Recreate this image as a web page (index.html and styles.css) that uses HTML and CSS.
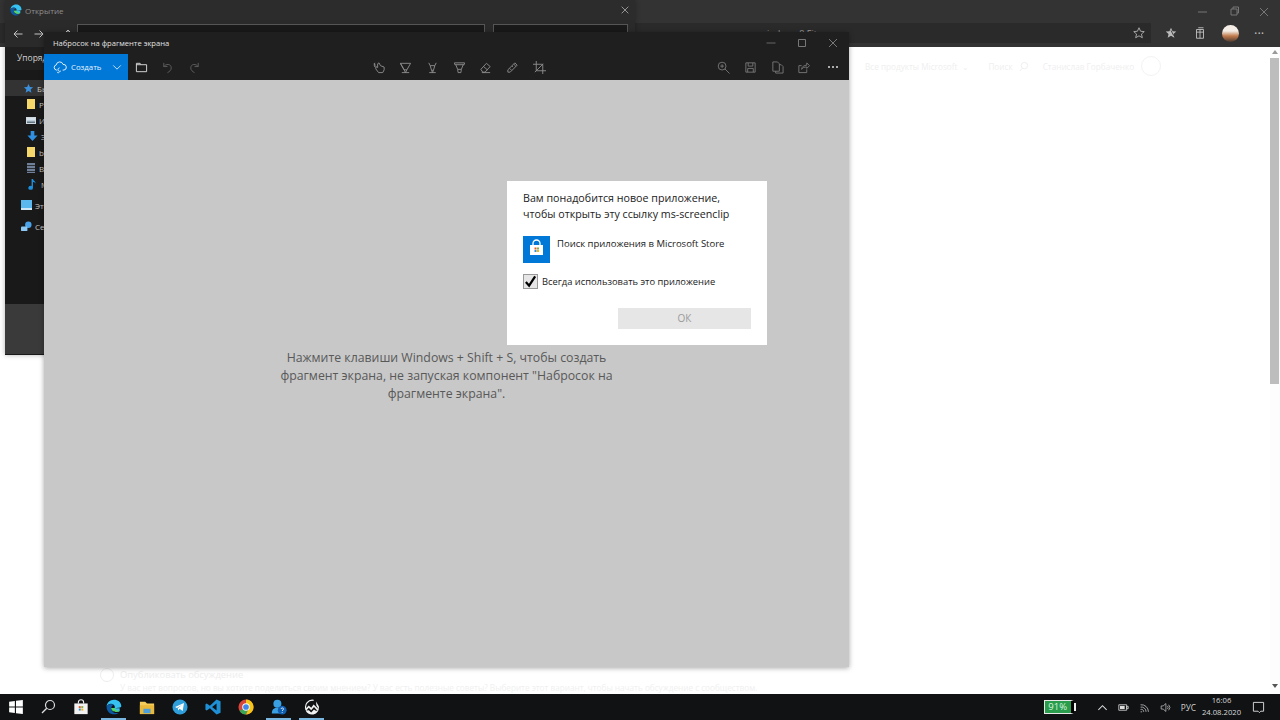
FILE: index.html
```html
<!DOCTYPE html>
<html lang="ru">
<head>
<meta charset="utf-8">
<title>Набросок на фрагменте экрана</title>
<link rel="stylesheet" href="styles.css">
</head>
<body>
<div class="desktop">
  <main class="browser">
    <div class="b-title">
      <svg class="wc" viewBox="0 0 30 12"><path d="M10 6h9" stroke="#777" fill="none"/></svg>
      <svg class="wc" viewBox="0 0 30 12"><path d="M12 3h6v6h-6zM14 3V1h5.500v6H18" stroke="#777" fill="none"/></svg>
      <svg class="wc" viewBox="0 0 30 12"><path d="M11 2l8 8M19 2l-8 8" stroke="#777" fill="none"/></svg>
    </div>
    <div class="b-tools">
      <div class="b-address"><span class="b-url">windows 8 Fit</span>
        <svg class="bi bi-star" viewBox="0 0 16 16"><path d="M8 2l1.800 4 4.200.400-3.200 2.800 1 4.200L8 11.200 4.200 13.400l1-4.200L2 6.400 6.200 6z" fill="none" stroke="#b5b5b5"/></svg>
      </div>
      <div class="b-icons">
        <svg class="bi" viewBox="0 0 16 16"><path d="M8 2l1.800 4 4.200.400-3.200 2.800 1 4.200L8 11.200 4.200 13.400l1-4.200L2 6.400 6.200 6z" fill="#bbb"/><path d="M8 5l3 6" stroke="#333"/></svg>
        <svg class="bi" viewBox="0 0 16 16"><path d="M4 4h8v10H4zM6 2h6M4 7h8M8 4v10" fill="none" stroke="#c5c5c5"/></svg>
        <span class="avatar"></span>
        <span class="b-more">···</span>
      </div>
    </div>
    <div class="page">
      <div class="page-main">
        <div class="ms-nav">
          <span>Все продукты Microsoft</span><span>⌄</span><span class="ms-search">Поиск</span>
          <svg class="ms-loupe" viewBox="0 0 12 12"><circle cx="7" cy="5" r="3.500" fill="none" stroke="#eee"/><path d="M4.500 8L2 11" stroke="#eee"/></svg>
          <span>Станислав Горбаченко</span>
          <span class="ms-user"></span>
        </div>
        <div class="discuss">
          <div class="discuss-title"><span class="radio"></span><span>Опубликовать обсуждение</span></div>
          <p class="discuss-note">У вас нет вопросов, но вы хотите поделиться своим мнением? У вас есть полезные советы? Выберите этот вариант, чтобы начать обсуждение с сообществом.</p>
        </div>
      </div>
      <div class="scrollbar">
        <span class="sb-up"></span>
        <span class="sb-thumb"></span>
        <span class="sb-down"></span>
      </div>
    </div>
  </main>

  <section class="explorer">
    <div class="ex-title">
      <svg class="edge-small" viewBox="0 0 24 24"><use href="#edge"/></svg>
      <span>Открытие</span>
      <svg class="ex-close" viewBox="0 0 12 12"><path d="M2 2l8 8M10 2l-8 8" stroke="#aaa" fill="none"/></svg>
    </div>
    <div class="ex-nav">
      <svg class="ex-arrow" viewBox="0 0 10 10"><path d="M9.500 5H1M4.500 1.500L1 5l3.500 3.500" fill="none" stroke="#c4c4c4"/></svg>
      <svg class="ex-arrow" viewBox="0 0 10 10"><path d="M.500 5H9M5.500 1.500L9 5 5.500 8.500" fill="none" stroke="#c4c4c4"/></svg>
      <svg class="ex-arrow ex-up" viewBox="0 0 10 10"><path d="M5 9.500V1M1.500 4.500L5 1l3.500 3.500" fill="none" stroke="#c4c4c4"/></svg>
      <div class="ex-addr"></div>
      <div class="ex-search"></div>
    </div>
    <div class="ex-cmd">Упорядочить</div>
    <ul class="ex-side">
      <li class="sel lvl2"><svg viewBox="0 0 12 12"><path d="M6 1l1.500 3.400 3.500.300-2.700 2.300.900 3.500L6 8.600 2.800 10.500l.900-3.500L1 4.700l3.500-.300z" fill="#3b8fd9"/></svg>Быстрый</li>
      <li class="lvl3"><span class="ic-folder"></span>Рабочий</li>
      <li class="lvl3"><span class="ic-pic"></span>Изображения</li>
      <li class="lvl3"><svg viewBox="0 0 12 12"><path d="M4 0h4v5h3.500L6 11 .500 5H4z" fill="#2f8fe0"/></svg>Загрузки</li>
      <li class="lvl3"><span class="ic-folder"></span>bin</li>
      <li class="lvl3"><span class="ic-film"></span>Видео</li>
      <li class="lvl3"><svg viewBox="0 0 12 12"><path d="M5 0h1.500c.300 2 3 2.500 3 5-1-1.500-2-1.700-3-1.800V9.500A2.500 2.200 0 1 1 5 7.600z" fill="#1d8fe0"/></svg>Музыка</li>
      <li class="lvl1 gap1"><span class="ic-pc"></span>Этот</li>
      <li class="lvl1 gap2"><svg viewBox="0 0 12 12"><circle cx="8" cy="4" r="3.500" fill="#4aa3e8"/><rect x="0" y="6" width="7" height="5" rx="1" fill="#8cc8f2"/></svg>Сеть</li>
    </ul>
    <div class="ex-foot"></div>
  </section>

  <section class="snip">
    <div class="sn-title">
      <span>Набросок на фрагменте экрана</span>
      <div class="sn-wc">
        <svg viewBox="0 0 12 12"><path d="M1.500 6h9" stroke="#666" fill="none"/></svg>
        <svg viewBox="0 0 12 12"><path d="M2.500 2.500h7v7h-7z" stroke="#777" fill="none"/></svg>
        <svg viewBox="0 0 12 12"><path d="M2 2l8 8M10 2l-8 8" stroke="#777" fill="none"/></svg>
      </div>
    </div>
    <div class="sn-bar">
      <div class="sn-group">
        <div class="sn-new">
          <svg class="sn-cloud" viewBox="0 0 16 16"><path d="M4.500 11.500H4A3 3 0 0 1 3.700 5.600a4 4 0 0 1 7.800-.500 3.200 3.200 0 0 1 1 6.400H11M7.500 9a2 2 0 1 0 1.500 3.500M5 13.500l1 1.500 1-1" fill="none" stroke="#fff"/></svg>
          <span>Создать</span>
          <svg class="sn-chev" viewBox="0 0 12 8"><path d="M1.500 1.500L6 6l4.500-4.500" fill="none" stroke="#d6e9fa" stroke-width="1.100"/></svg>
        </div>
        <span class="tb"><svg viewBox="0 0 14 14"><path d="M1.500 11.500v-9h4l1 1.500h6v7.500z M1.500 4h5" fill="none" stroke="#ddd"/></svg></span>
        <span class="tb"><svg viewBox="0 0 14 14"><path d="M3 2v4h4M3 6c2-3 8-3.500 8 1.500 0 2.500-2 4-4 5" fill="none" stroke="#5f5f5f"/></svg></span>
        <span class="tb"><svg viewBox="0 0 14 14"><path d="M11 2v4H7M11 6c-2-3-8-3.500-8 1.500 0 2.500 2 4 4 5" fill="none" stroke="#5f5f5f"/></svg></span>
      </div>
      <div class="sn-group">
        <span class="tb"><svg viewBox="0 0 14 14"><path d="M6 12.500L3 8.500V6l2 1V3l1.500-1L8 5l4 1.500v3l-1.500 3z M3 4.500A3 3 0 0 1 1 3M2 6.500A4 4 0 0 1 2 2" fill="none" stroke="#8d8d8d"/></svg></span>
        <span class="tb"><svg viewBox="0 0 14 14"><path d="M1.500 2.500h11L8.500 9.500h-3zM1.500 2.500l4 7M5.500 9.500L7 12.500 8.500 9.500M3 12.500h8" fill="none" stroke="#8d8d8d"/></svg></span>
        <span class="tb"><svg viewBox="0 0 14 14"><path d="M3 2l1.500 3h5L11 2M4.500 5L6 10h2l1.500-5M6 10l1 2.500L8 10M3.500 12.500h7" fill="none" stroke="#8d8d8d"/></svg></span>
        <span class="tb"><svg viewBox="0 0 14 14"><path d="M1.500 2h11L12 4H2zM3 4l2 5h4l2-5M5 9l.500 3.500h3L9 9" fill="none" stroke="#8d8d8d"/></svg></span>
        <span class="tb"><svg viewBox="0 0 14 14"><path d="M2 9l6-6.500 4 3.500-5.500 6H4zM5 6l4 3.500M3 12.500h9" fill="none" stroke="#8d8d8d"/></svg></span>
        <span class="tb"><svg viewBox="0 0 14 14"><path d="M2 9.500L9.500 2l2.500 2.500L4.500 12H2zM4 8l2 2M6.500 5.500l1 1M8.500 3.500l2 2" fill="none" stroke="#8d8d8d"/></svg></span>
        <span class="tb"><svg viewBox="0 0 14 14"><path d="M3.500 0v10.500H14M0 3.500h10.500V14M2 12l9-9" fill="none" stroke="#8d8d8d"/></svg></span>
      </div>
      <div class="sn-group">
        <span class="tb"><svg viewBox="0 0 14 14"><circle cx="5.500" cy="5.500" r="4.200" fill="none" stroke="#777"/><path d="M8.500 8.500l5 5M3.500 5.500h4M5.500 3.500v4" fill="none" stroke="#777"/></svg></span>
        <span class="tb"><svg viewBox="0 0 14 14"><path d="M2 2h10v10H2zM4.500 2v3.500h5V2M4 12V8h6v4" fill="none" stroke="#777"/></svg></span>
        <span class="tb"><svg viewBox="0 0 14 14"><path d="M2 1h5l2 2v8H2zM9 4h2l2 2v7H5v-2" fill="none" stroke="#777"/></svg></span>
        <span class="tb"><svg viewBox="0 0 14 14"><path d="M5 5H2v7.500h8.500V9M5 9c0-3 3-4.500 5.500-4.500V2L13.500 5l-3 3V6.500C8 6.500 6 7 5 9z" fill="none" stroke="#777"/></svg></span>
        <span class="tb more"><i></i><i></i><i></i></span>
      </div>
    </div>
    <div class="sn-canvas">
      <p class="sn-hint">Нажмите клавиши Windows + Shift + S, чтобы создать фрагмент экрана, не запуская компонент "Набросок на фрагменте экрана".</p>
    </div>
    <div class="dialog">
      <p class="dl-head">Вам понадобится новое приложение, чтобы открыть эту ссылку ms-screenclip</p>
      <div class="dl-app">
        <span class="dl-store">
          <svg viewBox="0 0 27 27"><path d="M10 9V7.500a3.500 3.500 0 0 1 7 0V9" fill="none" stroke="#fff" stroke-width="1.300"/><path d="M7 9h13v10H7z" fill="#fff"/><path d="M11.500 11.500h2v2h-2z" fill="#e8542a"/><path d="M14 11.500h2v2h-2z" fill="#7cb342"/><path d="M11.500 14h2v2h-2z" fill="#2b8fe0"/><path d="M14 14h2v2h-2z" fill="#f7b500"/></svg>
        </span>
        <span class="dl-app-name">Поиск приложения в Microsoft Store</span>
      </div>
      <label class="dl-check">
        <span class="dl-box"><svg viewBox="0 0 14 14"><path d="M2 7.500l3.500 4L12 1.500" fill="none" stroke="#000" stroke-width="2.400"/></svg></span>
        <span>Всегда использовать это приложение</span>
      </label>
      <div class="dl-ok">ОК</div>
    </div>
  </section>

  <footer class="taskbar">
    <div class="tk-left">
      <span class="tk tk-start"><svg viewBox="0 0 14 14"><path d="M1 2.500l5-.700V6.500H1zM7 1.600L13 .800V6.500H7zM1 7.500h5v4.700l-5-.700zM7 7.500h6v5.700l-6-.800z" fill="#fff"/></svg></span>
      <span class="tk tk-search"><svg viewBox="0 0 16 16"><circle cx="10" cy="6" r="4.500" fill="none" stroke="#ddd" stroke-width="1.200"/><path d="M6.700 9.300L2 14" stroke="#ddd" stroke-width="1.300"/></svg></span>
      <span class="tk"><svg viewBox="0 0 18 18"><path d="M6 5V3.800a3 3 0 0 1 6 0V5" fill="none" stroke="#f0f0f0" stroke-width="1.200"/><path d="M1.500 5h15v12h-15z" fill="#f2f2f2"/><path d="M6.500 8h2.200v2.200H6.500z" fill="#e8542a"/><path d="M9.300 8h2.200v2.200H9.300z" fill="#7cb342"/><path d="M6.500 10.800h2.200V13H6.500z" fill="#2b8fe0"/><path d="M9.300 10.800h2.200V13H9.300z" fill="#f7b500"/></svg></span>
      <span class="tk on"><svg viewBox="0 0 24 24"><defs><symbol id="edge" viewBox="0 0 24 24"><path d="M12 1C5.500 1 1.200 5.800 1 11.500 3 6.500 8.500 6 11.500 8.500c1.800 1.500 2 3.500 1.500 5H8c0 4 4.500 6 8.500 5.800 1.500 0 3-.500 4-1V14H14c2.500-1 9-.500 9-3C23 5 18 1 12 1z" fill="#35c1f1"/><path d="M1 11.500C.500 18 6 23 12 23c3 0 5.500-1 7-2.500-5 2-11-.500-11-7 0-2 1-3.500 3.500-5C7 6.500 2.500 7.500 1 11.500z" fill="#0c59a4"/><path d="M13 13.500H8c0 4 4.500 6.500 9 5.800 1.500-.300 3-1 4-2.300-2 .800-8.500 1.500-8-3.500z" fill="#5ad64f"/></symbol></defs><use href="#edge"/></svg></span>
      <span class="tk"><svg viewBox="0 0 18 18"><path d="M1 3h6l2 2h8v12H1z" fill="#f3cd5b"/><path d="M1 7h16v10H1z" fill="#e8b93a"/><path d="M5 11h8v5H5z" fill="#4a9fdc"/></svg></span>
      <span class="tk"><svg viewBox="0 0 18 18"><circle cx="9" cy="9" r="8.500" fill="#2f9fdc"/><path d="M3.500 9L13.500 4.500 12 13.500 8.500 11 7 13 6.500 10.500l5-4-6 3.500z" fill="#fff"/></svg></span>
      <span class="tk"><svg viewBox="0 0 18 18"><path d="M13 .500L17.500 2.500v13L13 17.500 5.500 10.500 2 13 .500 12V6l1.500-1 3.500 2.500zM13 5L8 9l5 4z" fill="#1f8fd6"/></svg></span>
      <span class="tk"><svg viewBox="0 0 18 18"><circle cx="9" cy="9" r="8.500" fill="#d8453a"/><path d="M9 9L1.800 13.500A8.500 8.500 0 0 0 9 17.500l4-8.500z" fill="#3aa757"/><path d="M9 .500a8.500 8.500 0 0 1 7.500 4.500H9zM13 9L9 17.500A8.500 8.500 0 0 0 16.500 5H9z" fill="#f5c518"/><circle cx="9" cy="9" r="4.200" fill="#fff"/><circle cx="9" cy="9" r="3.200" fill="#3f87ea"/></svg></span>
      <span class="tk on"><svg viewBox="0 0 20 20"><circle cx="8" cy="6" r="5" fill="#3aa0e4"/><path d="M1 18c0-5 3-7 7-7 2 0 3 .500 4 1.500V18z" fill="#3aa0e4"/><circle cx="14" cy="14" r="5.500" fill="#0f5fb2"/><path d="M12.500 12.500c0-1.800 3.200-1.800 3.200 0 0 1.200-1.700 1.200-1.700 2.500M14 16.500v1" stroke="#fff" fill="none"/></svg></span>
      <span class="tk on"><svg viewBox="0 0 20 20"><path d="M2.500 13A8.500 8.500 0 0 1 12 1.700" fill="none" stroke="#f2f2f2" stroke-width="1.500"/><path d="M15 3l3.500 6a8.500 8.500 0 1 1-17 3.500L6 8l3 3 3-4 6.500 6-3-5z" fill="#f2f2f2"/><path d="M3 14.500L6 11l3 3 3.500-4 4.500 5-3-.500-1.500-1.500L9 17l-3-3z" fill="#111"/></svg></span>
    </div>
    <div class="tk-right">
      <div class="battery"><span class="bat-body">91%</span><span class="bat-end"></span></div>
      <svg class="tr tr-chev" viewBox="0 0 12 12"><path d="M1.500 8.500L6 4l4.500 4.500" fill="none" stroke="#ddd" stroke-width="1.100"/></svg>
      <svg class="tr" viewBox="0 0 14 12"><path d="M1 2.500h10v7H1zM11 4.500h2v3h-2z" fill="none" stroke="#ddd"/><path d="M2.500 4h6v4h-6z" fill="#ddd"/></svg>
      <svg class="tr" viewBox="0 0 14 14"><path d="M2 12.500h2M2 9.500a3 3 0 0 1 4 3M2 6.500a6 6 0 0 1 7 6M2 3.500a9 9 0 0 1 10 9" fill="none" stroke="#c8c8c8"/></svg>
      <svg class="tr" viewBox="0 0 14 14"><path d="M1.500 5h2.500L7.500 2v10L4 9H1.500zM9.500 5a3 3 0 0 1 0 4M11 3.500a5 5 0 0 1 0 7" fill="none" stroke="#bbb"/></svg>
      <span class="tk-lang">РУС</span>
      <div class="tk-clock"><span>16:06</span><span>24.08.2020</span></div>
      <svg class="tr tr-note" viewBox="0 0 14 14"><path d="M1.500 1.500h11v9.500H9.500L8 12.500 6.500 11H1.500z" fill="none" stroke="#ddd"/></svg>
    </div>
  </footer>
</div>
</body>
</html>
```

FILE: styles.css
```css
* { box-sizing: border-box; }
html, body { margin: 0; padding: 0; }
body { width: 1280px; height: 720px; overflow: hidden; font-family: "Open Sans", "Noto Sans", sans-serif; background: #fff; }
p, ul { margin: 0; padding: 0; }
svg { display: block; }

.desktop { position: relative; width: 1280px; height: 720px; display: flex; flex-direction: column; overflow: hidden; }

/* Browser behind everything */
.browser { flex: 1; min-height: 0; display: flex; flex-direction: column; }
.b-title { height: 23px; background: #333; display: flex; justify-content: flex-end; align-items: center; padding-right: 1px; flex: none; }
.wc { width: 30px; height: 12px; }
.wc:nth-child(1) { margin-right: 1px; }
.b-tools { height: 24px; background: #333; display: flex; flex: none; }
.b-address { width: 1151px; height: 20px; background: #2a2a2a; display: flex; align-items: center; justify-content: flex-end; padding-right: 5px; }
.b-url { margin-right: auto; margin-left: 760px; font-size: 9px; color: #999; }
.b-icons { flex: 1; display: flex; align-items: center; height: 20px; padding-left: 13px; }
.bi { width: 14px; height: 14px; margin-right: 15px; }
.b-address .bi-star { margin-right: 0; }
.avatar { width: 17px; height: 17px; border-radius: 50%; background: linear-gradient(#f4eee6 35%, #c07a4c 65%, #4d3a30); flex: none; }
.b-more { color: #bbb; font-size: 13px; line-height: 12px; margin-left: 15px; }

.page { flex: 1; min-height: 0; display: flex; background: #fff; }
.page-main { flex: 1; min-width: 0; display: flex; flex-direction: column; justify-content: space-between; overflow: hidden; }
.ms-nav { display: flex; align-items: center; height: 38px; padding-left: 865px; color: #efefef; font-size: 8.200px; gap: 5px; }
.ms-search { margin-left: 14px; }
.ms-loupe { width: 11px; height: 11px; margin-right: 9px; }
.ms-user { width: 20px; height: 20px; border: 1px solid #f3f3f3; border-radius: 50%; margin-left: 2px; }
.discuss { padding-left: 100px; height: 26px; overflow: hidden; color: #ededed; }
.discuss-title { display: flex; align-items: center; gap: 6px; font-size: 9.400px; height: 13px; white-space: nowrap; }
.radio { width: 14px; height: 14px; border: 1px solid #eee; border-radius: 50%; }
.discuss-note { font-size: 8.200px; padding-left: 20px; white-space: nowrap; line-height: 12px; margin-top: 1px; color: #f0f0f0; }
.scrollbar { width: 10px; display: flex; flex-direction: column; background: #fdfdfd; flex: none; }
.sb-up { height: 10px; flex: none; position: relative; }
.sb-up::after { content: ""; position: absolute; left: 2px; top: 3px; border: 3px solid transparent; border-top: 0; border-bottom: 4px solid #999; }
.sb-thumb { height: 326px; flex: none; background: #bdbdbd; margin: 1px 1px 0 0; }
.sb-down { margin-top: auto; height: 12px; flex: none; position: relative; }
.sb-down::after { content: ""; position: absolute; left: 2px; top: 2px; border: 3px solid transparent; border-bottom: 0; border-top: 4px solid #555; }

/* Explorer window */
.explorer { position: absolute; left: 5px; top: 0; width: 630px; height: 355px; background: #191919; display: flex; flex-direction: column; box-shadow: 0 0 5px rgba(0,0,0,.3); overflow: hidden; }
.ex-title { height: 20px; background: #2c2c2c; display: flex; align-items: center; padding-left: 5px; color: #8f8f8f; font-size: 8px; flex: none; gap: 3px; }
.edge-small { width: 12px; height: 12px; }
.ex-close { width: 10px; height: 10px; margin-left: auto; margin-right: 5px; }
.ex-nav { height: 27px; background: #2a2a2a; display: flex; align-items: center; padding-left: 8px; flex: none; }
.ex-arrow { width: 10px; height: 10px; margin-right: 11px; flex: none; }
.ex-arrow.ex-up { margin-left: 8px; margin-right: 4px; }
.ex-addr { width: 408px; height: 20px; border: 1px solid #555; background: #191919; align-self: flex-start; margin-top: 4px; flex: none; }
.ex-search { width: 135px; height: 20px; margin-left: 8px; border: 1px solid #555; background: #191919; align-self: flex-start; margin-top: 4px; flex: none; }
.ex-cmd { height: 23px; background: #1f1f1f; color: #cfcfcf; font-size: 8.500px; padding: 5px 0 0 12px; flex: none; }
.ex-side { list-style: none; flex: 1; padding-top: 10px; }
.ex-side li { height: 16px; display: flex; align-items: center; color: #c6c6c6; font-size: 8px; }
.ex-side li svg { width: 11px; height: 11px; flex: none; margin-right: 3px; }
.ex-side .sel { background: #333; }
.lvl1 { padding-left: 16px; }
.lvl2 { padding-left: 18px; }
.lvl3 { padding-left: 22px; }
.ex-side .gap1 { margin-top: 5px; }
.ex-side .gap2 { margin-top: 5px; }
.ic-folder { width: 8px; height: 10px; background: #f6d76b; margin-right: 4px; flex: none; }
.ic-pic { width: 10px; height: 7px; background: linear-gradient(#d6e2ec 40%, #49606f); border: 1px solid #cfd8df; margin-left: -1px; margin-right: 3px; flex: none; }
.ic-film { width: 8px; height: 10px; background: repeating-linear-gradient(#6f7f9a 0 2px, #2c3138 2px 3px); margin-right: 4px; flex: none; }
.ic-pc { width: 11px; height: 10px; background: #5bb8ef; border-bottom: 2px solid #cfe6f5; margin-right: 3px; flex: none; }
.ex-foot { height: 50px; background: #3a3a3a; flex: none; margin-bottom: 1px; }

/* Snip & Sketch */
.snip { position: absolute; left: 44px; top: 32px; width: 805px; height: 635px; display: flex; flex-direction: column; box-shadow: 0 1px 5px rgba(0,0,0,.35); background: #c8c8c8; }
.sn-title { height: 22px; background: #1f1f1f; display: flex; align-items: center; justify-content: space-between; padding-left: 9px; color: #e2e2e2; font-size: 7.600px; flex: none; }
.sn-wc { display: flex; gap: 19px; padding-right: 10px; }
.sn-wc svg { width: 12px; height: 12px; }
.sn-bar { height: 26px; background: #1f1f1f; display: flex; justify-content: space-between; flex: none; }
.sn-group { display: flex; align-items: stretch; }
.sn-new { width: 84px; background: #0078d7; display: flex; align-items: center; color: #e8f2fb; font-size: 7.800px; padding-left: 9px; }
.sn-cloud { width: 14px; height: 14px; margin-right: 4px; }
.sn-chev { width: 10px; height: 7px; margin-left: auto; margin-right: 6px; }
.tb { width: 26.667px; display: flex; align-items: center; justify-content: center; }
.tb svg { width: 13px; height: 13px; }
.tb.more { width: 32px; gap: 2px; }
.tb.more i { width: 2px; height: 2px; background: #ddd; border-radius: 50%; }
.sn-canvas { flex: 1; min-height: 0; display: flex; align-items: center; justify-content: center; background: #c8c8c8; }
.sn-hint { width: 336px; text-align: center; font-size: 12.300px; line-height: 18px; color: #595959; margin-top: 4px; }

/* Dialog above sketch */
.dialog { position: absolute; left: 463px; top: 149px; width: 260px; height: 164px; background: #fff; padding: 10px 16px 0 16px; color: #222; display: flex; flex-direction: column; }
.dl-head { font-size: 10.700px; line-height: 15.500px; width: 215px; }
.dl-app { display: flex; margin-top: 14px; font-size: 9.500px; gap: 7px; }
.dl-store { width: 27px; height: 27px; background: #0078d7; flex: none; }
.dl-store svg { width: 27px; height: 27px; }
.dl-app-name { margin-top: 1px; }
.dl-check { display: flex; align-items: center; gap: 4px; margin-top: 11px; font-size: 9.350px; }
.dl-box { width: 15px; height: 15px; background: #e6e6e6; border: 1px solid #999; flex: none; }
.dl-box svg { width: 13px; height: 13px; }
.dl-ok { align-self: flex-end; margin-top: 19px; width: 133px; height: 21px; background: #e6e6e6; color: #9a9a9a; font-size: 10px; text-align: center; line-height: 21px; }

/* Taskbar */
.taskbar { height: 26px; background: #101214; display: flex; justify-content: space-between; flex: none; }
.tk-left { display: flex; }
.tk { width: 33px; display: flex; align-items: center; justify-content: center; position: relative; }
.tk svg { width: 16px; height: 16px; }
.tk-start { width: 31px; }
.tk-search { width: 33px; }
.tk.on::after { content: ""; position: absolute; left: 4px; right: 4px; bottom: 0; height: 2px; background: #7ab7e0; }
.tk-right { display: flex; align-items: center; }
.battery { display: flex; align-items: center; margin-right: 21px; }
.bat-body { width: 30px; height: 14px; background: #2a9d4d; border: 1px solid #e8e8e8; border-right: 3px solid #000; color: #d8f2df; font-size: 9.500px; line-height: 12px; text-align: center; }
.bat-end { width: 2px; height: 8px; background: #eee; }
.tr { width: 11px; height: 11px; margin-right: 10px; }
.tk-lang { color: #cfcfcf; font-size: 8.300px; }
.tk-clock { display: flex; flex-direction: column; align-items: center; color: #d8d8d8; font-size: 7.700px; line-height: 12px; margin-left: 5px; margin-right: 10px; width: 41px; margin-top: -2px; }
.tr-note { width: 13px; height: 13px; margin-right: 15px; }
```
